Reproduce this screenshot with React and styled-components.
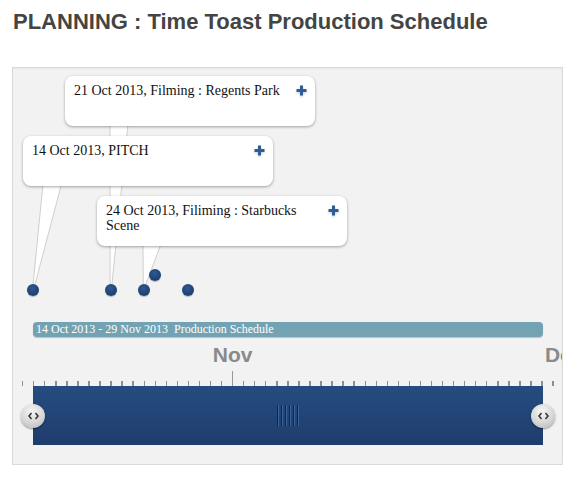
import React from 'react'
import styled, { createGlobalStyle } from 'styled-components'

const GlobalStyle = createGlobalStyle`
  html, body { margin: 0; padding: 0; background: #ffffff; }
  body { font-family: "Liberation Sans", Arial, sans-serif; }
`

const DAY = 11.05
const ORIGIN = 20.3

const events = [
  { id: 'regents', day: 7, text: '21 Oct 2013, Filming : Regents Park', box: [52, 8], tail: [97, 115] },
  { id: 'pitch', day: 0, text: '14 Oct 2013, PITCH', box: [10, 68], tail: [30, 48.5] },
  { id: 'starbucks', day: 10, text: '24 Oct 2013, Filiming : Starbucks Scene', box: [84, 128], tail: [130, 148] },
]

const extraDots = [
  { day: 11, lift: 15 },
  { day: 14, lift: 0 },
]

const months = [
  { label: 'Nov', day: 18 },
  { label: 'Dec', day: 48 },
]

const Page = styled.div`
  width: 579px;
  height: 478px;
  padding-left: 12px;
  box-sizing: border-box;
`

const Heading = styled.h1`
  margin: 0;
  box-sizing: border-box;
  height: 67px;
  padding: 9px 0 0 1px;
  font-family: "Liberation Sans", Arial, sans-serif;
  font-weight: bold;
  font-size: 22px;
  line-height: 26px;
  color: #444444;
`

const Panel = styled.section`
  width: 551px;
  height: 398px;
  box-sizing: border-box;
  border: 1px solid #dadada;
  background: #f2f2f2;
  box-shadow: inset 0 1px 2px rgba(0, 0, 0, 0.05);
  overflow: hidden;
  display: flex;
  flex-direction: column;
`

const Canvas = styled.div`
  position: relative;
  height: 254px;
  flex-shrink: 0;
`

const Tails = styled.svg`
  position: absolute;
  left: 0;
  top: 0;
  z-index: 1;
`

const Bubble = styled.div`
  position: absolute;
  left: ${(p) => p.$x}px;
  top: ${(p) => p.$y}px;
  z-index: 2;
  width: 250px;
  height: 50px;
  box-sizing: border-box;
  padding: 8px 30px 0 9px;
  background: #ffffff;
  border-radius: 8px;
  box-shadow: 0 1px 3px rgba(0, 0, 0, 0.35);
  font-family: "Liberation Serif", "Times New Roman", serif;
  font-size: 14px;
  line-height: 14.5px;
  color: #111111;
`

const PlusIcon = styled.svg`
  position: absolute;
  top: 9px;
  right: 8px;
  filter: drop-shadow(0 1px 1px rgba(0, 0, 0, 0.2));
`

const Dot = styled.span`
  position: absolute;
  left: ${(p) => p.$x - 6}px;
  top: ${(p) => p.$y - 6}px;
  z-index: 3;
  width: 12px;
  height: 12px;
  border-radius: 50%;
  background: radial-gradient(circle at 45% 35%, #2f5894 0%, #214476 55%, #1a3562 100%);
  box-shadow: 0 1px 1px rgba(0, 0, 0, 0.25);
`

const Track = styled.div`
  width: 510px;
  padding-left: 20px;
  flex-shrink: 0;
`

const Band = styled.div`
  height: 15px;
  box-sizing: border-box;
  padding-left: 3px;
  border-radius: 4px;
  background: #73a3b3;
  box-shadow: 0 1px 1px rgba(0, 0, 0, 0.2);
  font-family: "Liberation Serif", "Times New Roman", serif;
  font-size: 12px;
  line-height: 15px;
  color: #ffffff;
  white-space: pre;
`

const Axis = styled.div`
  position: relative;
  height: 49px;
  flex-shrink: 0;
  display: flex;
  flex-direction: column;
  justify-content: flex-end;
`

const MonthLabel = styled.span`
  position: absolute;
  left: ${(p) => p.$x}px;
  top: 7px;
  transform: translateX(-50%);
  font-family: "Liberation Sans", Arial, sans-serif;
  font-weight: bold;
  font-size: 21px;
  line-height: 21px;
  color: #8a8a8a;
`

const MajorTick = styled.span`
  position: absolute;
  left: ${(p) => p.$x}px;
  bottom: 0;
  width: 1px;
  height: 15px;
  background: #999999;
`

const Ticks = styled.div`
  margin-left: 8.5px;
  height: 5px;
  background: repeating-linear-gradient(
    90deg,
    #8f8f8f 0 1.4px,
    transparent 1.4px ${DAY}px
  );
`

const Slider = styled.div`
  position: relative;
  height: 59px;
  background: linear-gradient(#254c80, #1f3d6c);
  display: flex;
  align-items: center;
  justify-content: center;
`

const Grip = styled.span`
  width: 22px;
  height: 21px;
  background: repeating-linear-gradient(
    90deg,
    #122747 0 1px,
    #3c6297 1px 2px,
    transparent 2px 4px
  );
`

const Handle = styled.span`
  position: absolute;
  top: 50%;
  left: ${(p) => (p.$right ? '100%' : '0')};
  transform: translate(-50%, -50%);
  width: 24px;
  height: 24px;
  border-radius: 50%;
  background: radial-gradient(circle at 45% 30%, #f6f6f6 0%, #d6d6d6 55%, #b4b4b4 100%);
  box-shadow: 0 1px 2px rgba(0, 0, 0, 0.45);
  display: flex;
  align-items: center;
  justify-content: center;
`

function Plus() {
  return (
    <PlusIcon width="11" height="11" viewBox="0 0 11 11">
      <path d="M5.5 0.5v10M0.5 5.5h10" stroke="#2f5c94" strokeWidth="3" />
    </PlusIcon>
  )
}

function Arrows() {
  return (
    <svg width="11" height="8" viewBox="0 0 11 8">
      <path d="M3.5 1L1 4l2.5 3M7.5 1L10 4l-2.5 3" fill="none" stroke="#333" strokeWidth="1.5" />
    </svg>
  )
}

const dotX = (day) => ORIGIN + DAY * day
const DOT_Y = 222

export default function App() {
  return (
    <Page>
      <GlobalStyle />
      <Heading>PLANNING : Time Toast Production Schedule</Heading>
      <Panel>
        <Canvas>
          <Tails width="549" height="254">
            {events.map((e) => {
              const x = dotX(e.day)
              const baseY = e.box[1] + 48
              return (
                <polygon
                  key={e.id}
                  points={`${e.tail[0]},${baseY} ${e.tail[1]},${baseY} ${x + 1},${DOT_Y - 3} ${x - 0.5},${DOT_Y - 3}`}
                  fill="#ffffff"
                  stroke="#c4c4c4"
                  strokeWidth="0.8"
                />
              )
            })}
          </Tails>
          {events.map((e) => (
            <Bubble key={e.id} $x={e.box[0]} $y={e.box[1]}>
              {e.text}
              <Plus />
            </Bubble>
          ))}
          {events.map((e) => (
            <Dot key={e.id} $x={dotX(e.day)} $y={DOT_Y} />
          ))}
          {extraDots.map((d) => (
            <Dot key={d.day} $x={dotX(d.day)} $y={DOT_Y - d.lift} />
          ))}
        </Canvas>
        <Track>
          <Band>{'14 Oct 2013 - 29 Nov 2013  Production Schedule'}</Band>
        </Track>
        <Axis>
          {months.map((m) => (
            <MonthLabel key={m.label} $x={dotX(m.day) + 0.5}>
              {m.label}
            </MonthLabel>
          ))}
          <MajorTick $x={dotX(18) - 0.5} />
          <Ticks />
        </Axis>
        <Track>
          <Slider>
            <Handle>
              <Arrows />
            </Handle>
            <Grip />
            <Handle $right>
              <Arrows />
            </Handle>
          </Slider>
        </Track>
      </Panel>
    </Page>
  )
}
